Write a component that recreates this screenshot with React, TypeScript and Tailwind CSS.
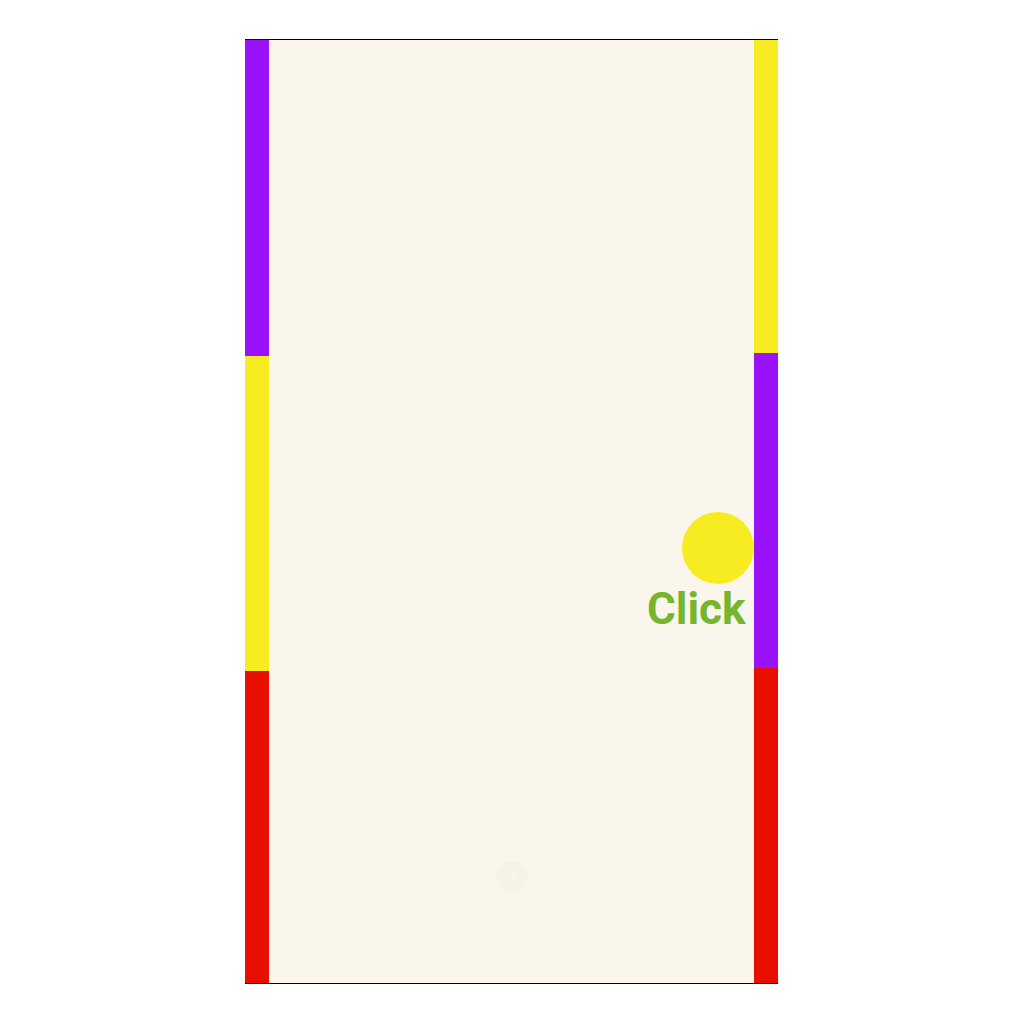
import React from "react";

export default function App() {
  return (
    <div className="w-[1024px] h-[1024px] bg-white pt-[39px] pl-[245px]" style={{ fontFamily: "Roboto, 'Noto Sans', sans-serif" }}>
      <div className="relative w-[533px] h-[945px] border-y border-black flex bg-[#faf6ec]">
        <div className="w-[24px] flex flex-col">
          <div className="h-[316px] bg-[#9a12fa]" />
          <div className="h-[315px] bg-[#f7eb22]" />
          <div className="flex-1 bg-[#e80e00]" />
        </div>
        <div className="flex-1 relative">
          <div className="absolute left-[413px] top-[472px] w-[72px] h-[72px] rounded-full bg-[#f7eb22]" />
          <div className="absolute left-[378px] top-[539px] text-[44px] leading-[60px] font-bold text-[#76b52e]">Click</div>
          <div className="absolute left-[227px] top-[821px] w-[32px] h-[32px] rounded-full bg-[#f6f2e7] flex items-center justify-center text-[#faf6ec] text-[20px] font-bold">?</div>
        </div>
        <div className="w-[24px] flex flex-col">
          <div className="h-[313px] bg-[#f7eb22]" />
          <div className="h-[315px] bg-[#9a12fa]" />
          <div className="flex-1 bg-[#e80e00]" />
        </div>
      </div>
    </div>
  );
}
